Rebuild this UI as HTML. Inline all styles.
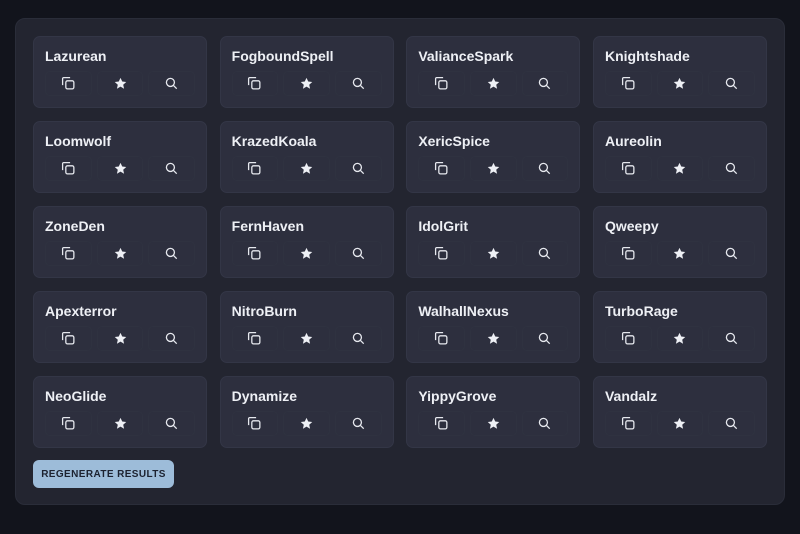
<!DOCTYPE html>
<html><head><style>
*{box-sizing:border-box;margin:0;padding:0}
body{width:800px;height:534px;background:#12141c;font-family:"Liberation Sans",sans-serif;overflow:hidden;position:relative}
.panel{position:absolute;left:15px;top:18px;width:770px;height:487px;background:#232530;border-radius:10px;border:1px solid #2a2d39;padding:17px 17px}
.grid{display:grid;grid-template-columns:repeat(4,174px);column-gap:12.67px;row-gap:13px}
.card{height:72px;background:#2d2f3e;border-radius:7px;border:1px solid #333646;padding:0 11px}
.t{color:#eef0f5;font-weight:bold;font-size:14px;margin-top:11px;height:20px;line-height:16px}
.btns{display:flex;gap:5px;margin-top:3px}
.b{width:47px;height:25px;border:1px solid #2f3240;border-radius:5px;display:flex;align-items:center;justify-content:center}
.btn{position:absolute;left:33px;top:460px;width:141px;height:28px;background:#9dbcd9;border-radius:6px;color:#1c2230;font-weight:bold;font-size:10px;letter-spacing:.4px;display:flex;align-items:center;justify-content:center}
</style></head><body>
<div class="panel"><div class="grid" id="g">
</div></div>
<div class="btn">REGENERATE RESULTS</div>
<script>
var n=["Lazurean","FogboundSpell","ValianceSpark","Knightshade","Loomwolf","KrazedKoala","XericSpice","Aureolin","ZoneDen","FernHaven","IdolGrit","Qweepy","Apexterror","NitroBurn","WalhallNexus","TurboRage","NeoGlide","Dynamize","YippyGrove","Vandalz"];
var c='<svg width="15" height="15" viewBox="0 0 14 14" fill="none" stroke="#e6e8ee" stroke-width="1.2"><path d="M1.5 8.5V2.5a1 1 0 0 1 1-1h6"/><rect x="4.5" y="4.5" width="7.5" height="7.5" rx="1.5"/></svg>';
var s='<svg width="13" height="13" viewBox="0 0 12 12"><path fill="#eef0f5" d="M6 .8l1.6 3.4 3.7.4-2.8 2.5.8 3.7L6 8.9 2.7 10.8l.8-3.7L.7 4.6l3.7-.4z"/></svg>';
var q='<svg width="13" height="13" viewBox="0 0 12 12" fill="none" stroke="#e6e8ee" stroke-width="1.2"><circle cx="5" cy="5" r="3.7"/><path d="M7.8 7.8l3 3"/></svg>';
var h='';n.forEach(function(x){h+='<div class="card"><div class="t">'+x+'</div><div class="btns"><div class="b">'+c+'</div><div class="b">'+s+'</div><div class="b">'+q+'</div></div></div>'});
document.getElementById('g').innerHTML=h;
</script>
</body></html>
